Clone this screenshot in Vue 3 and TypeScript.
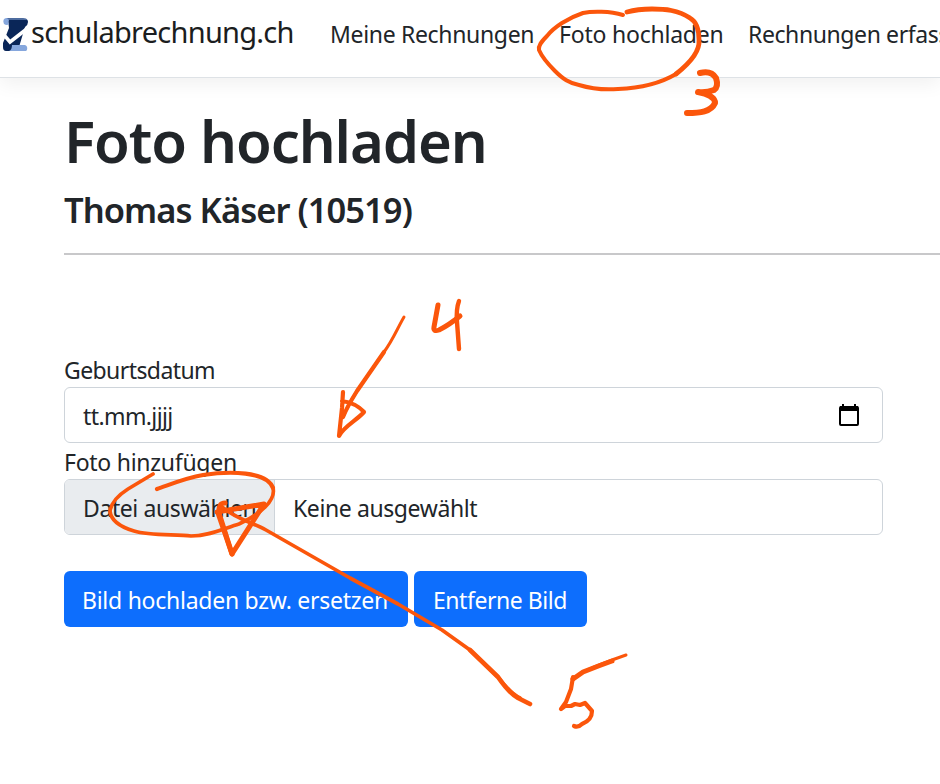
<script setup lang="ts">
import { ref } from 'vue'

interface NavItem {
  label: string
  key: string
}

interface Stroke {
  d: string
  width: number
}

const navItems: NavItem[] = [
  { label: 'Meine Rechnungen', key: 'list' },
  { label: 'Foto hochladen', key: 'photo' },
  { label: 'Rechnungen erfassen', key: 'create' },
]

const fileName = ref('Keine ausgewählt')

const strokes: Stroke[] = [
  // Circle around the menu entry
  { d: 'M623 15C610 11 592 11 583 13C568 18 554 27 547 36C541 42 538 46 539 50C542 57 548 64 555 71C563 79 569 83 579 85C592 89 605 90 618 89C643 88 661 83 676 74', width: 4 },
  { d: 'M676 74C690 63 700 51 699 40C699 31 697 22 690 18C678 10 665 9 652 9C642 9 634 10 627 12', width: 4.8 },
  // 3
  { d: 'M700 73C708 71 713 73 716 78C718 84 717 88 714 90Q706 93 698 92C708 94 715 97 715 103C711 112 700 113 687 113', width: 6 },
  // 4 with arrow
  { d: 'M438 305L434 327Q433 332 439 330Q449 325 460 316', width: 5 },
  { d: 'M459 301Q456 309 457 322L459 349', width: 4.4 },
  { d: 'M404 317C397 329 393 340 384 352L357 391Q347 407 343 417', width: 3 },
  { d: 'M384 352L357 391Q347 407 343 417M343 392L342 408L339 436C344 426 356 421 364 412Q356 403 342 401', width: 4.2 },
  // Circle around the file button
  { d: 'M153 474L128 489C117 496 111 504 110 511C111 522 124 528 134 531C150 536 176 534 191 536C210 536 225 528 239 524C261 514 276 500 273 488', width: 3.7 },
  { d: 'M273 488C267 471 229 471 203 475C185 478 169 485 157 489', width: 4.2 },
  // 5 with arrow
  { d: 'M217 512L264 504L232 554L219 513Q218 503 225 503', width: 5 },
  { d: 'M218 513L232 554', width: 5 },
  { d: 'M222 507C238 520 252 522 266 530L350 578L398 604L442 630L470 650L498 677Q511 694 520 698', width: 3.7 },
  { d: 'M470 650L498 677Q509 693 518 698L530 704', width: 4.6 },
  { d: 'M626 655Q600 664 583 672L573 679', width: 3 },
  { d: 'M612 661Q598 666 583 672L573 679', width: 5 },
  { d: 'M573 677L571 689L566 702L561 709L565 706L571 706L575 704L580 705L585 703L592 711Q592 720 582 724Q578 728 574 726', width: 4.2 },
]
</script>

<template>
  <div class="page">
    <header class="navbar">
      <a class="brand">
        <svg class="logo" width="26" height="34" viewBox="0 0 26 34" aria-hidden="true">
          <path d="M5 1H22Q25 1 25 4Q25 7 22 9L16 29Q15 33 11 33H3Q0 33 0 29V25L6 10Z" fill="#0a2658" />
          <path d="M3 0H8Q4 3 6 6Q4 8 1 6Q-1 1 3 0Z" fill="#86a7dd" />
          <path d="M4 0H20Q24 0 24 2H6Z" fill="#4e6c9f" />
          <path d="M9 27H22Q25 28 24 32L23 33H6Q9 32 9 27Z" fill="#86a7dd" />
          <path d="M1 17L7 24L25 10" fill="none" stroke="#fff" stroke-width="3.6" />
        </svg>
        <span class="brand-name">schulabrechnung.ch</span>
      </a>
      <nav class="links">
        <a v-for="item in navItems" :key="item.key" class="link" :class="item.key">{{ item.label }}</a>
      </nav>
    </header>

    <main class="content">
      <h1>Foto hochladen</h1>
      <h2>Thomas Käser (10519)</h2>
      <hr />
      <form class="form" @submit.prevent>
        <label class="label birth">Geburtsdatum</label>
        <div class="control date">
          <span class="date-text">tt.mm.jjjj</span>
          <svg class="calendar" width="20" height="22" viewBox="0 0 20 22" aria-hidden="true">
            <path d="M4 0V3M16 0V3" stroke="#000" stroke-width="2" />
            <rect x="1" y="3" width="18" height="18" rx="1" fill="none" stroke="#000" stroke-width="2" />
            <path d="M1 2H19V7H1Z" fill="#000" />
          </svg>
        </div>
        <label class="label photo-label">Foto hinzufügen</label>
        <div class="control file">
          <span class="choose">Datei auswählen</span>
          <span class="file-name">{{ fileName }}</span>
        </div>
        <div class="actions">
          <button class="btn upload" type="submit">Bild hochladen bzw. ersetzen</button>
          <button class="btn remove" type="button">Entferne Bild</button>
        </div>
      </form>
    </main>

    <svg class="marks" width="940" height="784" viewBox="0 0 940 784" aria-hidden="true">
      <path v-for="(stroke, i) in strokes" :key="i" :d="stroke.d" :stroke-width="stroke.width" />
    </svg>
  </div>
</template>

<style>
body {
  margin: 0;
  background: #fff;
}
</style>

<style scoped>
.page {
  position: relative;
  width: 940px;
  height: 784px;
  overflow: hidden;
  background: #fff;
  color: #212529;
  font-family: 'Noto Sans', 'Open Sans', sans-serif;
  font-size: 23px;
  line-height: 36px;
  letter-spacing: -0.4px;
  white-space: nowrap;
}
.navbar {
  display: flex;
  align-items: flex-start;
  box-sizing: border-box;
  height: 78px;
  padding-left: 3px;
  border-bottom: 1px solid #dee2e6;
  box-shadow: 0 6px 18px rgba(0, 0, 0, 0.06);
}
.brand {
  display: flex;
  flex: none;
  width: 327px;
  color: #1b1d20;
}
.logo {
  flex: none;
  margin-top: 18px;
}
.brand-name {
  margin: 9px 0 0 2px;
  font-size: 29px;
  line-height: 45px;
  letter-spacing: -0.74px;
}
.links {
  display: flex;
  gap: 25px;
  padding-top: 16px;
}
.link {
  flex: none;
}
.link.list {
  width: 204px;
  letter-spacing: -0.33px;
}
.link.photo {
  width: 164px;
  letter-spacing: -0.22px;
}
.content {
  padding: 27px 0 0 64px;
}
h1 {
  margin: 0;
  font-size: 58px;
  font-weight: 560;
  line-height: 72px;
  letter-spacing: -1.08px;
}
h2 {
  margin: 11px 0 0;
  font-size: 34.5px;
  font-weight: 560;
  line-height: 43px;
  letter-spacing: -0.95px;
}
hr {
  height: 2px;
  margin: 22px 0 0;
  border: 0;
  background: #c8c8ca;
}
.form {
  display: flex;
  flex-direction: column;
  width: 819px;
  padding-top: 96px;
}
.label {
  box-sizing: border-box;
  height: 36px;
  padding-top: 1px;
}
.birth {
  letter-spacing: -0.58px;
}
.photo-label {
  letter-spacing: -0.27px;
}
.control {
  display: flex;
  align-items: center;
  box-sizing: border-box;
  height: 56px;
  overflow: hidden;
  border: 1px solid #ced4da;
  border-radius: 6px;
}
.date {
  justify-content: space-between;
  padding: 0 23px 0 18px;
}
.date-text {
  padding-top: 2px;
  letter-spacing: -0.6px;
}
.choose {
  display: flex;
  align-items: center;
  box-sizing: border-box;
  width: 210px;
  height: 100%;
  padding: 2px 0 0 18px;
  border-right: 1px solid #ced4da;
  background: #e9ecef;
}
.file-name {
  padding: 2px 0 0 18px;
}
.actions {
  display: flex;
  gap: 6px;
  padding-top: 36px;
}
.btn {
  box-sizing: border-box;
  height: 56px;
  padding: 2px 0 0 18px;
  border: 0;
  border-radius: 6px;
  background: #0d6efd;
  color: #fff;
  font: inherit;
  letter-spacing: -0.26px;
  text-align: left;
}
.upload {
  width: 344px;
}
.remove {
  width: 173px;
  padding-left: 19px;
  letter-spacing: -0.45px;
}
.marks {
  position: absolute;
  inset: 0;
  pointer-events: none;
}
.marks path {
  fill: none;
  stroke: #fb560b;
  stroke-linecap: round;
  stroke-linejoin: round;
}
</style>
